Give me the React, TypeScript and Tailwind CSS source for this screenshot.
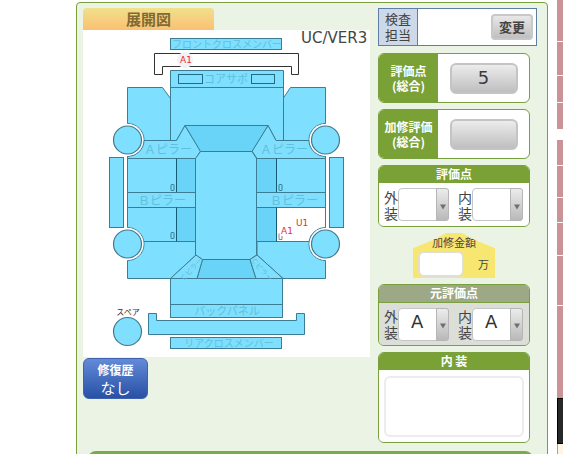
import type { ReactNode } from "react";

interface GradeSelectProps {
  id: string;
  label: string;
  options: string[];
}

interface ScoreCardProps {
  title: string;
  value: string;
}

interface PanelProps {
  title: string;
  headerClass?: string;
  bodyClass?: string;
  children: ReactNode;
}

const rows = [
  "h-[41px] bg-[#cb9396]",
  "h-[33px] bg-[#cb9396]",
  "h-[26px] bg-[#cb9396]",
  "h-[26px] bg-[#cb9396]",
  "h-[9px] bg-white",
  "h-[25px] bg-[#cb9396]",
  "h-[31px] bg-[#cb9396]",
  "h-[24px] bg-[#cb9396]",
  "h-[32px] bg-[#cb9396]",
  "h-[49px] bg-[#cb9396]",
  "h-[92px] bg-[#cb9396]",
];

function GradeSelect({ id, label, options }: GradeSelectProps) {
  return (
    <div className="flex items-center">
      <label htmlFor={id} className="w-[14px] text-sm leading-4">
        {label}
      </label>
      <div className="relative">
        <select
          id={id}
          className="block h-[33px] w-[51px] appearance-none rounded border border-[#c4c6c6] bg-white pb-1 pl-3 font-['DejaVu_Sans',sans-serif] text-lg leading-none text-[#333]"
        >
          {options.map((option) => (
            <option key={option}>{option}</option>
          ))}
        </select>
        <span className="pointer-events-none absolute inset-y-0 right-0 flex w-[13px] items-center justify-center rounded-r-[3px] border border-[#b5b5b5] bg-linear-to-b from-[#ececec] to-[#b9b9b9]">
          <svg viewBox="0 0 8 6" className="mt-1 h-[6px] w-[8px] shrink-0">
            <path d="M1 0.5h6L4 5.5z" fill="#707070" />
          </svg>
        </span>
      </div>
    </div>
  );
}

function ScoreCard({ title, value }: ScoreCardProps) {
  return (
    <div className="flex h-[50px] overflow-hidden rounded-md border border-[#79a03c] bg-white">
      <div className="flex w-[59px] items-center justify-center bg-[#79a135] text-center text-xs leading-[15px] font-bold whitespace-pre-line text-white">
        {`${title}\n(総合)`}
      </div>
      <div className="flex flex-1 items-center justify-center">
        <button
          type="button"
          aria-label={title}
          className="h-[31px] w-[68px] rounded-md border-2 border-[#c4c4c4] bg-linear-to-b from-[#ececec] to-[#bfbfbf] font-['DejaVu_Sans',sans-serif] text-lg leading-none text-[#3c3c3c]"
        >
          {value}
        </button>
      </div>
    </div>
  );
}

function Panel({
  title,
  headerClass = "bg-[#79a135]",
  bodyClass = "bg-white",
  children,
}: PanelProps) {
  return (
    <section className="overflow-hidden rounded-md border border-[#79a03c]">
      <h2
        className={`h-[17px] text-center text-xs leading-4 font-bold text-white ${headerClass}`}
      >
        {title}
      </h2>
      <div className={bodyClass}>{children}</div>
    </section>
  );
}

function CarDiagram() {
  return (
    <svg
      viewBox="83 30 287 327"
      className="block h-auto w-full bg-white"
      role="img"
      aria-label="展開図"
    >
      <g fill="#7fdfff" stroke="#3c7d93" strokeWidth="1">
        <rect x="170.5" y="38.5" width="111" height="11" />
        <path
          d="M154.500 53.500H298.500V74.500H291.500V66.500H162.500V74.500H154.500Z"
          fill="#fff"
          stroke="#333"
        />

        {/* fenders and doors, one side each */}
        <path d="M127.500 87.500H162.500L170.500 98.500V140.500L196 158.500V255L170.500 278.500H127.500V260.500A16.500 16.500 0 0 0 127.500 227.500V156.500A16.500 16.500 0 0 0 127.500 123.500Z" />
        <path d="M325.500 87.500H290.500L283 98.500V140.500L257 158.500V255L283 278.500H325.500V260.500A16.500 16.500 0 0 1 325.500 227.500V156.500A16.500 16.500 0 0 1 325.500 123.500Z" />

        <path d="M170.500 70.500H283.500V140.500H276L268 125.500H185L176.500 140.500H170.500Z" />
        <path d="M170.500 87.500H283.500" />
        <rect x="178.500" y="74.500" width="24" height="9" stroke="#236b84" />
        <rect x="251.500" y="74.500" width="23" height="9" stroke="#236b84" />

        {/* A pillars */}
        <path d="M144 140.500H176.500L185 125.500L200.500 151L196 158.500H127.500V156.500A16.500 16.500 0 0 0 144 140.500Z" />
        <path d="M309 140.500H276L268 125.500L252 151L257 158.500H325.500V156.500A16.500 16.500 0 0 1 309 140.500Z" />

        <path d="M185 125.500H268L252 151.500H200.500Z" fill="#69d4f8" />
        <path d="M200.500 151.500H252L256.500 158.500V255L250 259.500H202.500L195.500 255V158.500Z" />
        <path d="M202.500 259.500H250L256 278.500H197Z" fill="#69d4f8" />

        {/* side windows */}
        <rect x="176.500" y="158.500" width="19" height="83" fill="#69d4f8" />
        <rect x="256.500" y="158.500" width="20" height="83" fill="#69d4f8" />
        <path d="M276.500 207.500H325.500V227.500A16.500 16.500 0 0 0 309 241.500H276.500Z" fill="#fff" />
        <path d="M144 241.500H195.500M257 241.500H309" />
        <rect x="127.500" y="192.500" width="68" height="15" />
        <rect x="256.500" y="192.500" width="69" height="15" />
        <path d="M176.500 158.500V192M176.500 207.500V241.500M276.500 158.500V192M276.500 207.500V241.500" stroke="#155b73" />
        <rect x="171" y="184.500" width="3" height="6" rx="0.500" />
        <rect x="171" y="232.500" width="3" height="6" rx="0.500" />
        <rect x="279" y="184.500" width="3" height="6" rx="0.500" />
        <path d="M279 233.500V239.500H282V236" fill="none" stroke="#888" />

        {/* C pillars */}
        <path d="M170.500 278.500L196 255L202.500 259.500L197 278.500Z" />
        <path d="M283 278.500L257 255L250 259.500L256 278.500Z" />
        <rect x="170.500" y="278.500" width="112" height="39" />
        <path d="M170.500 304.500H282.500" />
        <path d="M148.500 313.500H156.500V320.500H296.500V313.500H304.500V334.500H148.500Z" />
        <rect x="170.500" y="337.500" width="111" height="11" />

        <rect x="109.500" y="157.500" width="14" height="70" />
        <rect x="329.500" y="157.500" width="14" height="70" />
      </g>

      {/* wheels */}
      <g fill="#fff">
        <circle cx="127.500" cy="140" r="15.900" />
        <circle cx="325.500" cy="140" r="15.900" />
        <circle cx="127.500" cy="244" r="15.900" />
        <circle cx="325.500" cy="244" r="15.900" />
      </g>
      <g fill="#7fdfff" stroke="#47798a" strokeWidth="1.200">
        <circle cx="127.500" cy="140" r="14" />
        <circle cx="325.500" cy="140" r="14" />
        <circle cx="127.500" cy="244" r="14" />
        <circle cx="325.500" cy="244" r="14" />
        <circle cx="127.500" cy="331.500" r="14" />
      </g>

      <g fill="#60bfdc" fontSize="11" textAnchor="middle">
        <text x="227" y="48" fontSize="10">フロントクロスメンバー</text>
        <text x="226" y="83">コアサポ</text>
        <text x="168" y="154" fontSize="12">Ａピラー</text>
        <text x="284" y="154" fontSize="12">Ａピラー</text>
        <text x="162" y="205" fontSize="12">Ｂピラー</text>
        <text x="294" y="205" fontSize="12">Ｂピラー</text>
        <text x="227" y="315">バックパネル</text>
        <text x="229" y="347" fontSize="10">リアクロスメンバー</text>
        <text x="191" y="272" fontSize="7" transform="rotate(-48 191 269)">Ｃピラー</text>
        <text x="262" y="272" fontSize="7" transform="rotate(48 262 269)">Ｃピラー</text>
      </g>
      <text x="128" y="315" fontSize="8" textAnchor="middle" fill="#333">
        スペア
      </text>
      <circle cx="185" cy="60" r="8" fill="#f2f2f2" />
      <g fill="#e0303a" fontSize="9" fontFamily="DejaVu Sans, sans-serif">
        <text x="180" y="63">A1</text>
        <text x="281" y="234">A1</text>
        <text x="296" y="226">U1</text>
      </g>
      <text x="301" y="43" fontSize="15" fill="#444" fontFamily="DejaVu Sans, sans-serif">
        UC/VER3
      </text>
    </svg>
  );
}

export default function App() {
  return (
    <div className="flex h-screen overflow-hidden bg-white pt-[2px] pl-[76px] font-['Noto_Sans_CJK_JP',sans-serif] text-[#444]">
      <main className="min-w-0 flex-1 self-start rounded-t-sm border border-[#79a03c] bg-[#eaf3e4] pt-[5px] pr-[10px] pb-4 pl-[6px]">
        <div className="flex items-start gap-2">
          <div className="min-w-0 flex-1">
            <h1 className="h-[22px] w-[131px] rounded-t bg-linear-to-b from-[#f0e08c] to-[#fbc072] text-center text-[15px] leading-[22px] font-bold text-[#806a32]">
              展開図
            </h1>
            <CarDiagram />
            <button
              type="button"
              className="mt-px flex h-[41px] w-[65px] flex-col items-center justify-center rounded-md border border-[#3e62ad] bg-linear-to-b from-[#638bd8] to-[#2850a5] text-white"
            >
              <span className="text-xs leading-[18px] font-bold">修復歴</span>
              <span className="text-[15px] leading-[18px]">なし</span>
            </button>
          </div>

          <div className="w-[159px] shrink-0">
            <div className="flex h-[38px] border border-[#5f7ea3] bg-white">
              <div className="flex w-[39px] items-center justify-center border-r border-[#5f7ea3] bg-[#cdd9e9] text-center text-[13px] leading-4 whitespace-pre-line">
                {"検査\n担当"}
              </div>
              <div className="flex flex-1 items-center justify-end pr-[3px]">
                <button
                  type="button"
                  className="h-[26px] w-[42px] rounded border-2 border-[#c8c8c8] bg-linear-to-b from-[#e8e8e8] to-[#bfbfbf] text-[13px] leading-5 font-bold text-[#444]"
                >
                  変更
                </button>
              </div>
            </div>

            <div className="mt-[7px] mr-[7px] flex flex-col gap-[6px]">
              <ScoreCard title="評価点" value="5" />
              <ScoreCard title="加修評価" value="" />

              <Panel title="評価点">
                <div className="flex h-[43px] items-center justify-between pr-[6px] pl-[5px]">
                  <GradeSelect id="outer" label="外装" options={[""]} />
                  <GradeSelect id="inner" label="内装" options={[""]} />
                </div>
              </Panel>

              <div className="mx-auto h-[45px] w-[82px] bg-[#f7e670] [clip-path:polygon(0_34%,28%_13%,40%_0,60%_0,72%_13%,100%_34%,100%_100%,0_100%)]">
                <label
                  htmlFor="repair"
                  className="block text-center text-[11px] leading-[18px]"
                >
                  加修金額
                </label>
                <div className="flex items-center gap-[14px] pl-[5px]">
                  <input
                    id="repair"
                    type="text"
                    className="h-[26px] w-[46px] rounded-md border-2 border-[#e0dfd2] bg-white px-1 text-sm"
                  />
                  <span className="text-[11px]">万</span>
                </div>
              </div>

              <Panel
                title="元評価点"
                headerClass="bg-[#9ca886]"
                bodyClass="border-t border-[#79a03c] bg-[#dcdfd8]"
              >
                <div className="flex h-[42px] items-center justify-between pr-[6px] pl-[5px]">
                  <GradeSelect id="outer-org" label="外装" options={["A"]} />
                  <GradeSelect id="inner-org" label="内装" options={["A"]} />
                </div>
              </Panel>

              <Panel title="内 装">
                <div className="p-[5px] pt-[6px]">
                  <textarea
                    aria-label="内装"
                    className="block h-[61px] w-full resize-none rounded-md border-2 border-[#ececf0] bg-white p-1 text-xs"
                  />
                </div>
              </Panel>
            </div>
          </div>
        </div>
        <div className="mt-2 mr-1 ml-[5px] h-6 rounded-t-lg bg-[#79ab4a]" />
      </main>

      <aside className="-mt-[2px] ml-[9px] w-[6px] shrink-0">
        <div className="flex flex-col gap-px">
          {rows.map((row, i) => (
            <div key={i} className={row} />
          ))}
        </div>
        <div className="h-[46px] border-y border-l border-black bg-[#262829]" />
        <div className="h-6 border-l border-[#cb9396] bg-[#fff3e4]" />
      </aside>
    </div>
  );
}
